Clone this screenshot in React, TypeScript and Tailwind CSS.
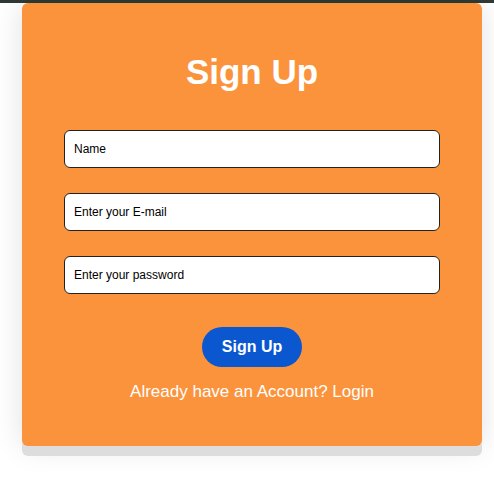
export default function App() {
  return (
    <div className="min-h-[491px] w-full bg-white font-['Liberation_Sans',Arial,sans-serif]">
      <div className="h-[3px] w-full bg-[#2e3b34]" />
      <div className="ml-[22px] w-[460px] rounded-[6px] bg-[#fb933c] px-[42px] pt-[48px] pb-[44px] shadow-[0_10px_0_#dddddd,0_0_30px_rgba(0,0,0,0.12)]">
        <h1 className="text-center text-[35px] font-bold leading-[42px] text-white">Sign Up</h1>
        <form className="mt-[37px] flex flex-col gap-[25px]" onSubmit={(e) => e.preventDefault()}>
          <input
            type="text"
            placeholder="Name"
            className="h-[38px] w-full rounded-[6px] border border-[#222] bg-white px-[9px] text-[12px] text-black outline-none placeholder:text-black"
          />
          <input
            type="email"
            placeholder="Enter your E-mail"
            className="h-[38px] w-full rounded-[6px] border border-[#222] bg-white px-[9px] text-[12px] text-black outline-none placeholder:text-black"
          />
          <input
            type="password"
            placeholder="Enter your password"
            className="h-[38px] w-full rounded-[6px] border border-[#222] bg-white px-[9px] text-[12px] text-black outline-none placeholder:text-black"
          />
          <div className="mt-[8px] flex justify-center">
            <button
              type="submit"
              className="h-[40px] w-[100px] rounded-full bg-[#0b57d0] text-[16px] font-bold text-white"
            >
              Sign Up
            </button>
          </div>
        </form>
        <p className="mt-[15px] text-center text-[17px] leading-[20px] text-white">
          Already have an Account? Login
        </p>
      </div>
    </div>
  );
}
